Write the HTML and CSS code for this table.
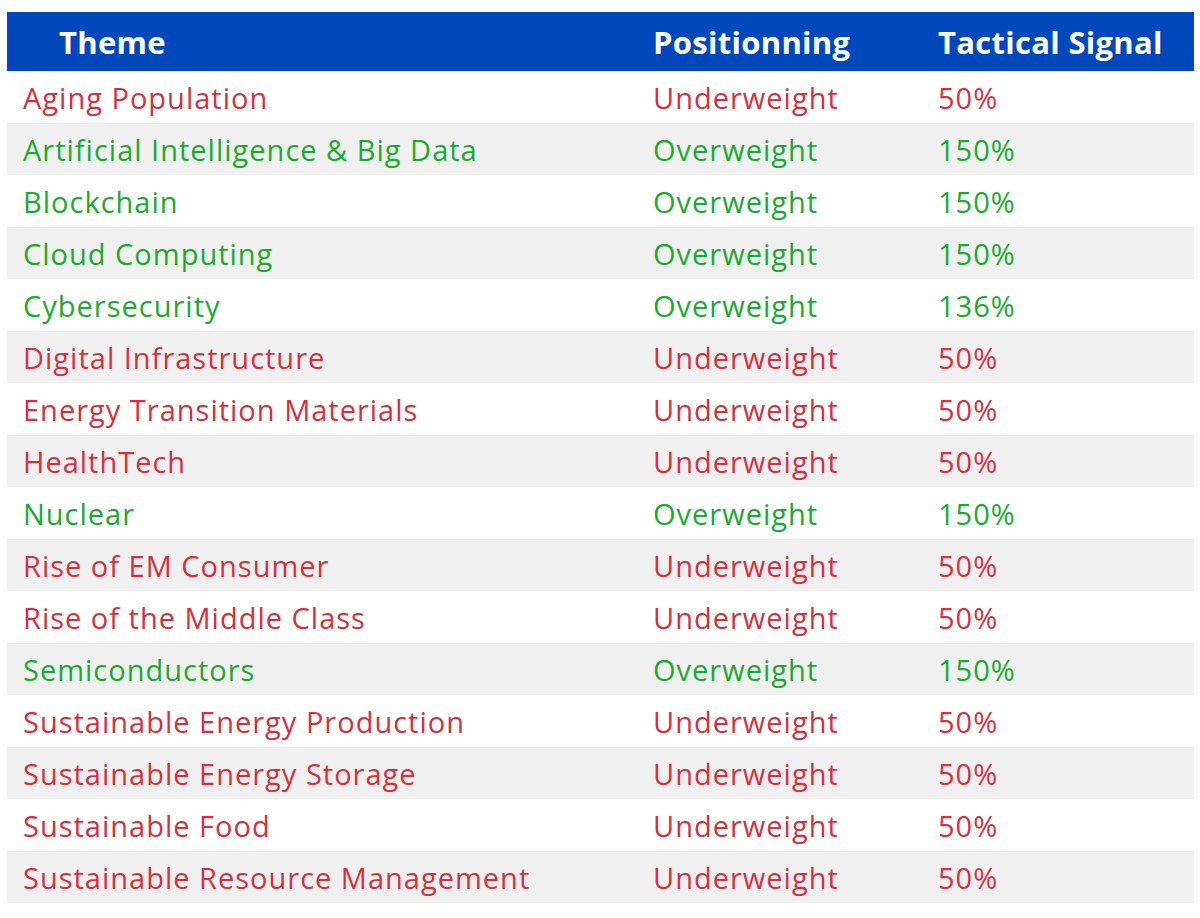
FILE: index.html
```html
<!DOCTYPE html>
<html>
<head>
<meta charset="utf-8">
<link rel="stylesheet" href="styles.css">
</head>
<body>
<div class="table">
  <div class="row head">
    <div class="cell first">Theme</div>
    <div class="cell">Positionning</div>
    <div class="cell">Tactical Signal</div>
  </div>
  <div class="row under"><div class="cell">Aging Population</div><div class="cell">Underweight</div><div class="cell">50%</div></div>
  <div class="row over alt"><div class="cell">Artificial Intelligence &amp; Big Data</div><div class="cell">Overweight</div><div class="cell">150%</div></div>
  <div class="row over"><div class="cell">Blockchain</div><div class="cell">Overweight</div><div class="cell">150%</div></div>
  <div class="row over alt"><div class="cell">Cloud Computing</div><div class="cell">Overweight</div><div class="cell">150%</div></div>
  <div class="row over"><div class="cell">Cybersecurity</div><div class="cell">Overweight</div><div class="cell">136%</div></div>
  <div class="row under alt"><div class="cell">Digital Infrastructure</div><div class="cell">Underweight</div><div class="cell">50%</div></div>
  <div class="row under"><div class="cell">Energy Transition Materials</div><div class="cell">Underweight</div><div class="cell">50%</div></div>
  <div class="row under alt"><div class="cell">HealthTech</div><div class="cell">Underweight</div><div class="cell">50%</div></div>
  <div class="row over"><div class="cell">Nuclear</div><div class="cell">Overweight</div><div class="cell">150%</div></div>
  <div class="row under alt"><div class="cell">Rise of EM Consumer</div><div class="cell">Underweight</div><div class="cell">50%</div></div>
  <div class="row under"><div class="cell">Rise of the Middle Class</div><div class="cell">Underweight</div><div class="cell">50%</div></div>
  <div class="row over alt"><div class="cell">Semiconductors</div><div class="cell">Overweight</div><div class="cell">150%</div></div>
  <div class="row under"><div class="cell">Sustainable Energy Production</div><div class="cell">Underweight</div><div class="cell">50%</div></div>
  <div class="row under alt"><div class="cell">Sustainable Energy Storage</div><div class="cell">Underweight</div><div class="cell">50%</div></div>
  <div class="row under"><div class="cell">Sustainable Food</div><div class="cell">Underweight</div><div class="cell">50%</div></div>
  <div class="row under alt"><div class="cell">Sustainable Resource Management</div><div class="cell">Underweight</div><div class="cell">50%</div></div>
</div>
</body>
</html>
```

FILE: styles.css
```css
html, body {
  margin: 0;
  padding: 0;
  background: #ffffff;
}
body {
  padding: 12px 6px 0 7px;
  font-family: "Open Sans", "Noto Sans", sans-serif;
}
.table {
  width: 1187px;
}
.row {
  display: grid;
  grid-template-columns: 630px 285px 1fr;
  height: 52px;
  align-items: center;
  font-size: 29px;
  letter-spacing: 1px;
}
.row.head {
  height: 59px;
  background: #0048bb;
  color: #ffffff;
  font-weight: 700;
  font-size: 31px;
  letter-spacing: 0.3px;
}
.cell {
  padding-left: 16px;
  white-space: nowrap;
}
.head .cell.first {
  padding-left: 52px;
}
.alt {
  background: #f0f0f0;
}
.under {
  color: #d6303f;
}
.over {
  color: #1aab2e;
}
```
